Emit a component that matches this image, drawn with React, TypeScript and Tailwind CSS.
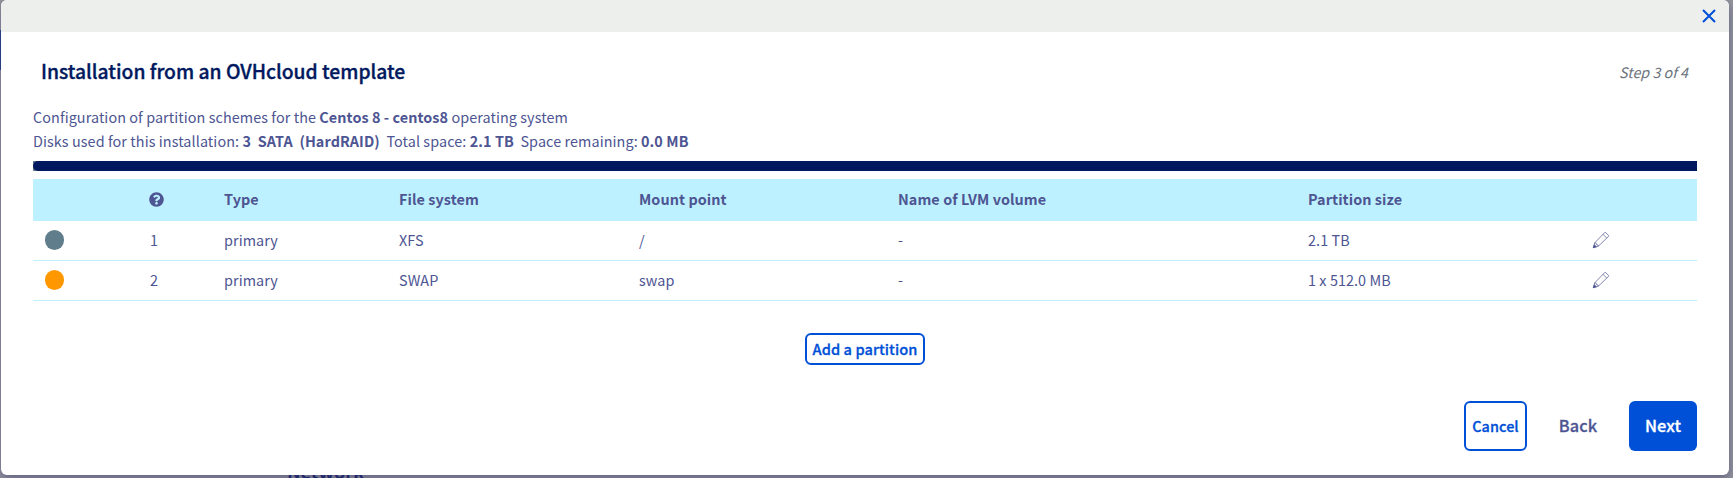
import React from "react";
import { FaQuestionCircle } from "react-icons/fa";

const columns = "grid grid-cols-[106px_74px_175px_240px_259px_410px_284px_116px] pl-[11px]";

function Pencil() {
  return (
    <svg width="18" height="18" viewBox="0 0 18 18" fill="none" stroke="#4d5592" strokeWidth="0.7" strokeLinejoin="round">
      <path d="M1.3 16.7 2.8 11.7 12.6 1.7Q13.2 1.1 13.8 1.7L16.4 4.3Q17 4.9 16.4 5.5L6.4 15.2Z" />
      <path d="M11 3.4 14.7 7.1M2.8 11.7 4.2 12.2 4.5 13.7 6 14 6.4 15.2" />
      <path d="M1.3 16.7 2.2 13.7 4.4 15.8Z" fill="#4d5592" />
    </svg>
  );
}

const rows = [
  { dot: "bg-[#607d8b]", n: "1", type: "primary", fs: "XFS", mount: "/", lvm: "-", size: "2.1 TB" },
  { dot: "bg-[#ff9800]", n: "2", type: "primary", fs: "SWAP", mount: "swap", lvm: "-", size: "1 x 512.0 MB" },
];

export default function App() {
  return (
    <div className="relative h-[478px] w-[1733px] overflow-hidden bg-[#94949c] pl-px font-['Noto_Sans_CJK_SC',sans-serif] text-[14.4px] tracking-[0.07px] text-[#4d5592]">
      <div className="absolute top-[30px] left-0 h-10 w-px bg-[#284388]" />
      <div className="absolute top-[459px] left-[287px] text-[18px] leading-[24px] font-bold text-[#17236b]">Network</div>
      <div className="relative flex h-[475px] w-[1728px] flex-col overflow-hidden rounded-[6px] bg-white shadow-[0_4px_10px_rgba(50,54,110,0.5)]">
        <div className="flex h-8 shrink-0 items-center justify-end bg-[#ecefec] pr-[13px]">
          <svg width="14" height="14" viewBox="0 0 14 14" stroke="#0050d7" strokeWidth="2">
            <path d="M1 1 13 13M13 1 1 13" />
          </svg>
        </div>
        <div className="mt-[25px] flex h-7 items-center justify-between pr-[41px] pl-[40px]">
          <h1 className="pb-px text-[19.3px] leading-7 font-medium tracking-normal text-[#00185e] [-webkit-text-stroke:0.35px_#00185e]">Installation from an OVHcloud template</h1>
          <span className="pt-px text-[14.3px] tracking-normal text-[#6c737c] italic">Step 3 of 4</span>
        </div>
        <div className="mt-5 h-14 pl-8 leading-6 whitespace-pre">
          <p>Configuration of partition schemes for the <b>Centos 8 - centos8</b> operating system</p>
          <p className="tracking-[0.08px]">Disks used for this installation: <b>3  SATA  (HardRAID)</b>  Total space: <b>2.1 TB</b>  Space remaining: <b>0.0 MB</b></p>
        </div>
        <div className="ml-8 h-[10px] w-[1664px] shrink-0 bg-[#607d8b]">
          <div className="h-full rounded-l-[5px] bg-[#00185e]" />
        </div>
        <div className="mt-2 ml-8 w-[1664px]">
          <div className={`${columns} h-[42px] items-center bg-[#bef1ff] pb-[2px] font-bold`}>
            <span />
            <span className="-ml-px"><FaQuestionCircle size={15} /></span>
            <span>Type</span>
            <span>File system</span>
            <span>Mount point</span>
            <span>Name of LVM volume</span>
            <span>Partition size</span>
          </div>
          {rows.map((r) => (
            <div key={r.n} className={`${columns} h-10 items-center border-b border-[#bef1ff] pb-[2px]`}>
              <span className={`${r.dot} ml-px h-5 w-[19px] rounded-[9.5px]`} />
              <span>{r.n}</span>
              <span>{r.type}</span>
              <span>{r.fs}</span>
              <span>{r.mount}</span>
              <span>{r.lvm}</span>
              <span>{r.size}</span>
              <span className="pt-px"><Pencil /></span>
            </div>
          ))}
        </div>
        <div className="mt-8 flex justify-center">
          <button className="h-8 w-[120px] rounded-[6px] border-2 border-[#0050d7] text-[14.6px] leading-6 font-medium whitespace-nowrap text-[#0050d7] [-webkit-text-stroke:0.3px_#0050d7]">Add a partition</button>
        </div>
        <div className="mt-9 flex h-[50px] items-center pl-[1463px] leading-6 font-medium">
          <button className="h-[50px] w-[63px] rounded-[6px] border-2 border-[#0050d7] text-[14.4px] text-[#0050d7] [-webkit-text-stroke:0.3px_#0050d7]">Cancel</button>
          <button className="w-[102px] pb-[2px] text-[16.3px] [-webkit-text-stroke:0.3px_#4d5592]">Back</button>
          <button className="h-[50px] w-[68px] rounded-[6px] bg-[#0050d7] pb-[2px] text-[16.4px] text-white [-webkit-text-stroke:0.3px_white]">Next</button>
        </div>
      </div>
    </div>
  );
}
